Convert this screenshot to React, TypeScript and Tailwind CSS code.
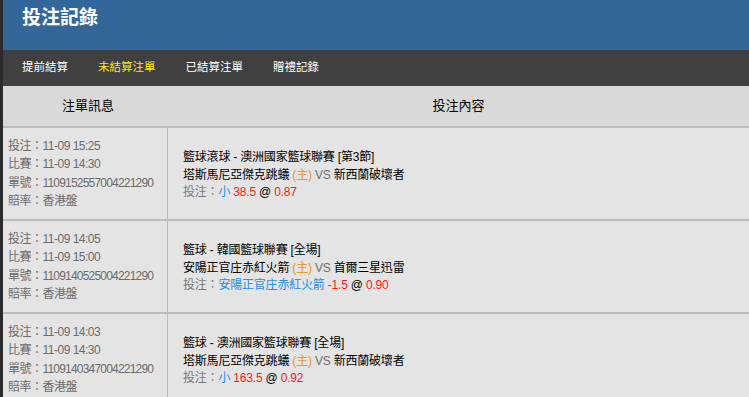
const FONT = "font-['Liberation_Sans','Noto_Sans_CJK_TC',sans-serif]";

type Bet = {
  placed: string;
  match: string;
  id: string;
  league: string;
  home: string;
  away: string;
  pick: string;
  line: string;
  odds: string;
};

const BETS: Bet[] = [
  {
    placed: "11-09 15:25",
    match: "11-09 14:30",
    id: "1109152557004221290",
    league: "籃球滾球 - 澳洲國家籃球聯賽 [第3節]",
    home: "塔斯馬尼亞傑克跳蟻",
    away: "新西蘭破壞者",
    pick: "小",
    line: "38.5",
    odds: "0.87",
  },
  {
    placed: "11-09 14:05",
    match: "11-09 15:00",
    id: "1109140525004221290",
    league: "籃球 - 韓國籃球聯賽 [全場]",
    home: "安陽正官庄赤紅火箭",
    away: "首爾三星迅雷",
    pick: "安陽正官庄赤紅火箭",
    line: "-1.5",
    odds: "0.90",
  },
  {
    placed: "11-09 14:03",
    match: "11-09 14:30",
    id: "1109140347004221290",
    league: "籃球 - 澳洲國家籃球聯賽 [全場]",
    home: "塔斯馬尼亞傑克跳蟻",
    away: "新西蘭破壞者",
    pick: "小",
    line: "163.5",
    odds: "0.92",
  },
];

const TABS = ["提前結算", "未結算注單", "已結算注單", "贈禮記錄"];

export default function App() {
  return (
    <div className={`${FONT} min-h-[397px] w-[749px] overflow-hidden border-l-[3px] border-[#2b2b2b] bg-[#e4e4e4]`}>
      {/* Title bar */}
      <div className="flex h-[50px] items-start bg-[#336699] pl-[19px] pt-[5px]">
        <h1 className="text-[19px] font-bold leading-[26px] text-white">投注記錄</h1>
      </div>

      {/* Tabs */}
      <div className="flex h-[36px] items-center gap-[30px] bg-[#404040] pl-[19px]">
        {TABS.map((t, i) => (
          <span
            key={t}
            className={`text-[11.5px] leading-none ${i === 1 ? "text-[#ffeb00]" : "text-white"}`}
          >
            {t}
          </span>
        ))}
      </div>

      {/* Table head */}
      <div className="flex h-[42px] items-center border-b-2 border-[#bdbdbd] bg-[#d9d9d9] text-[13px] text-black">
        <div className="w-[165px] pl-[5px] text-center">注單訊息</div>
        <div className="flex-1 text-center">投注內容</div>
      </div>

      {BETS.map((b) => (
        <div key={b.id} className="flex h-[93px] border-b-2 border-[#bdbdbd]">
          <div className="flex w-[165px] flex-col justify-center whitespace-nowrap border-r border-[#bdbdbd] pl-[5px] text-[12px] leading-[18.5px] tracking-[-0.5px] text-[#6b6b6b]">
            <div>投注：{b.placed}</div>
            <div>比賽：{b.match}</div>
            <div>單號：<span className="tracking-[-0.8px]">{b.id}</span></div>
            <div>賠率：香港盤</div>
          </div>
          <div className="flex flex-1 flex-col justify-center pl-[15px] pt-[4px] text-[12px] leading-[17.5px] tracking-[-0.2px] text-black">
            <div>{b.league}</div>
            <div>
              {b.home} <span className="text-[#f0942c]">(主)</span>{" "}
              <span className="text-[#6f6f6f]">VS</span> {b.away}
            </div>
            <div className="text-[#7a7a7a]">
              投注：<span className="text-[#2a8ce6]">{b.pick}</span>{" "}
              <span className="text-[#ff1a1a]">{b.line}</span>{" "}
              <span className="text-black">@</span>{" "}
              <span className="text-[#ff1a1a]">{b.odds}</span>
            </div>
          </div>
        </div>
      ))}
    </div>
  );
}
